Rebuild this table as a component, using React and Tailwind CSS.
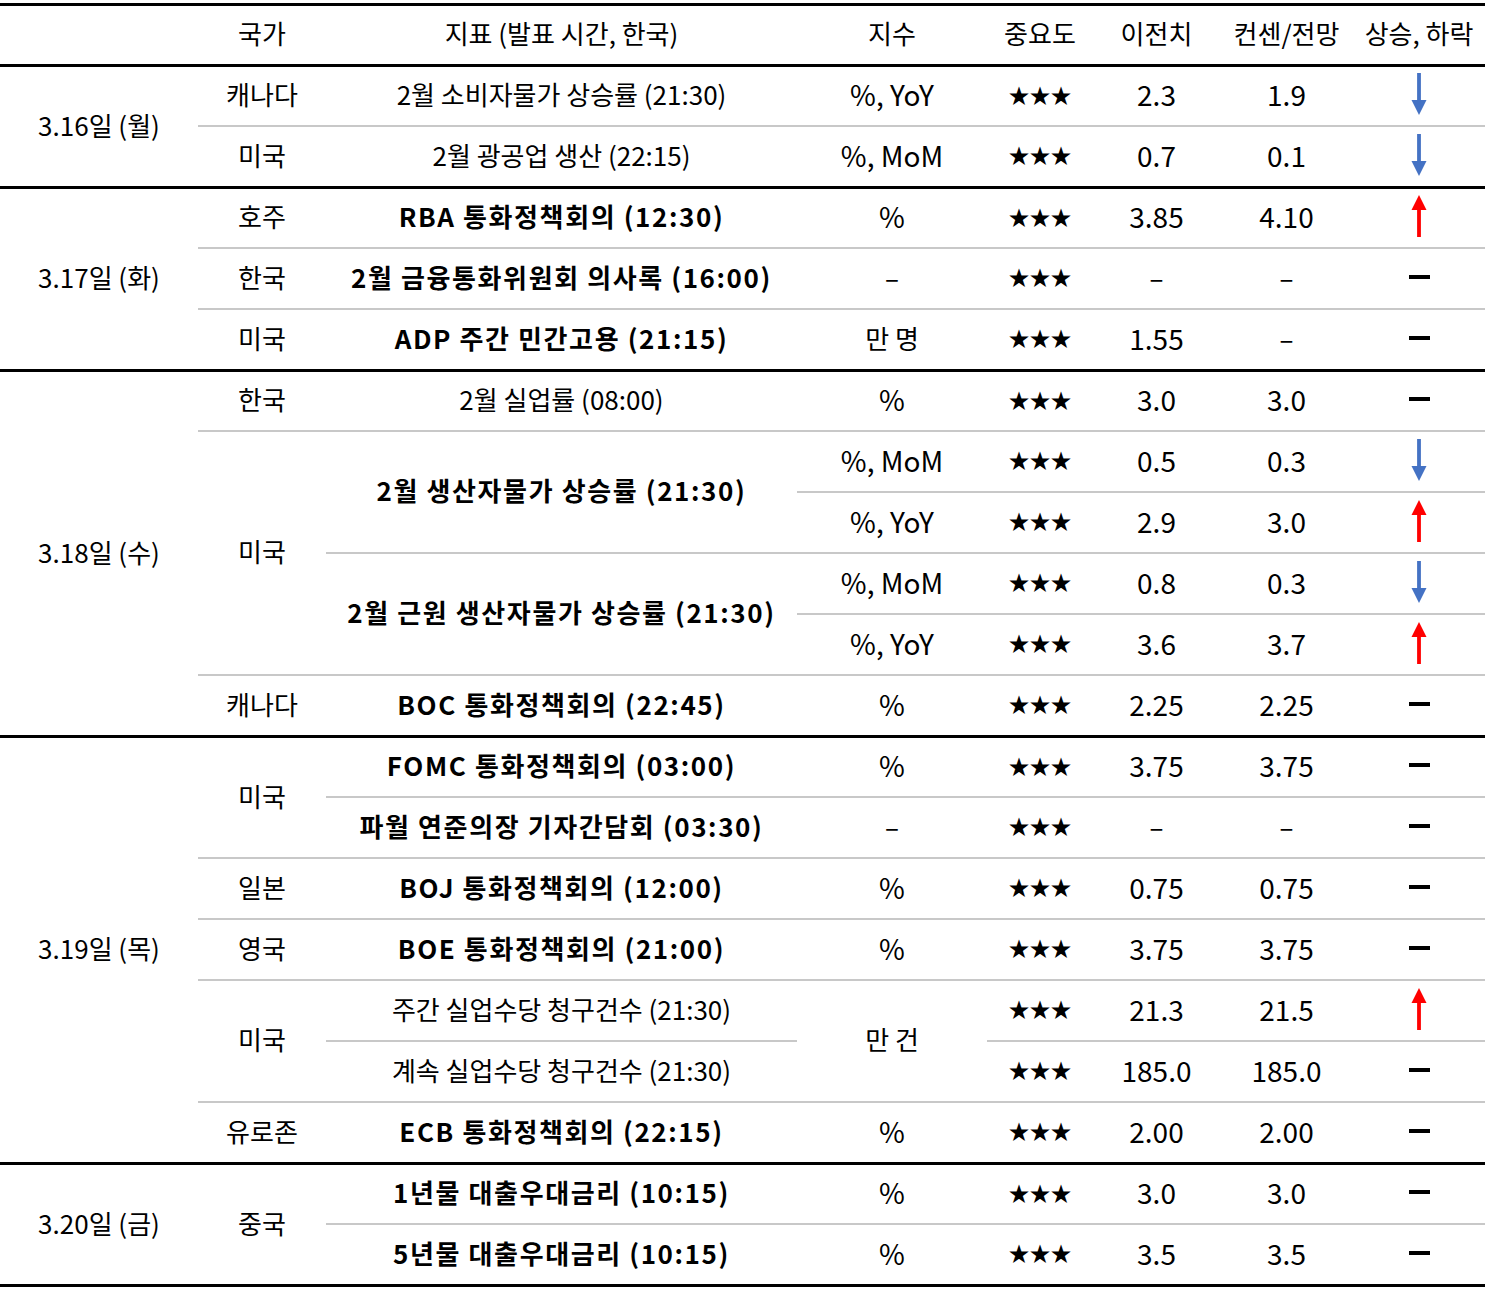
import React from 'react';

const c = (t, s = 1) => ({ t, s });
const B = (t, s = 1) => ({ t, s, b: true });
const star = { t: '★★★', star: true };
const up = { arrow: 'up' };
const down = { arrow: 'down' };
const flat = { arrow: 'flat' };

const groups = [
  {
    date: '3.16일 (월)',
    rows: [
      [c('캐나다'), c('2월 소비자물가 상승률 (21:30)'), c('%, YoY'), star, c('2.3'), c('1.9'), down],
      [c('미국'), c('2월 광공업 생산 (22:15)'), c('%, MoM'), star, c('0.7'), c('0.1'), down],
    ],
  },
  {
    date: '3.17일 (화)',
    rows: [
      [c('호주'), B('RBA 통화정책회의 (12:30)'), c('%'), star, c('3.85'), c('4.10'), up],
      [c('한국'), B('2월 금융통화위원회 의사록 (16:00)'), c('–'), star, c('–'), c('–'), flat],
      [c('미국'), B('ADP 주간 민간고용 (21:15)'), c('만 명'), star, c('1.55'), c('–'), flat],
    ],
  },
  {
    date: '3.18일 (수)',
    rows: [
      [c('한국'), c('2월 실업률 (08:00)'), c('%'), star, c('3.0'), c('3.0'), flat],
      [c('미국', 4), B('2월 생산자물가 상승률 (21:30)', 2), c('%, MoM'), star, c('0.5'), c('0.3'), down],
      [c('%, YoY'), star, c('2.9'), c('3.0'), up],
      [B('2월 근원 생산자물가 상승률 (21:30)', 2), c('%, MoM'), star, c('0.8'), c('0.3'), down],
      [c('%, YoY'), star, c('3.6'), c('3.7'), up],
      [c('캐나다'), B('BOC 통화정책회의 (22:45)'), c('%'), star, c('2.25'), c('2.25'), flat],
    ],
  },
  {
    date: '3.19일 (목)',
    rows: [
      [c('미국', 2), B('FOMC 통화정책회의 (03:00)'), c('%'), star, c('3.75'), c('3.75'), flat],
      [B('파월 연준의장 기자간담회 (03:30)'), c('–'), star, c('–'), c('–'), flat],
      [c('일본'), B('BOJ 통화정책회의 (12:00)'), c('%'), star, c('0.75'), c('0.75'), flat],
      [c('영국'), B('BOE 통화정책회의 (21:00)'), c('%'), star, c('3.75'), c('3.75'), flat],
      [c('미국', 2), c('주간 실업수당 청구건수 (21:30)'), c('만 건', 2), star, c('21.3'), c('21.5'), up],
      [c('계속 실업수당 청구건수 (21:30)'), star, c('185.0'), c('185.0'), flat],
      [c('유로존'), B('ECB 통화정책회의 (22:15)'), c('%'), star, c('2.00'), c('2.00'), flat],
    ],
  },
  {
    date: '3.20일 (금)',
    rows: [
      [c('중국', 2), B('1년물 대출우대금리 (10:15)'), c('%'), star, c('3.0'), c('3.0'), flat],
      [B('5년물 대출우대금리 (10:15)'), c('%'), star, c('3.5'), c('3.5'), flat],
    ],
  },
];

const spanCls = {
  1: '',
  2: 'row-span-2',
  3: 'row-span-3',
  4: 'row-span-4',
  6: 'row-span-6',
  7: 'row-span-7',
};

// latin-only cells (numbers, units) read a bit larger in the source
const isLatin = (t) => typeof t === 'string' && /[0-9%]/.test(t) && !/[가-힣]/.test(t);

const Arrow = ({ dir }) => {
  if (dir === 'flat') return <div className="w-[21px] h-[4px] bg-black" />;
  const color = dir === 'up' ? '#ff0000' : '#4472c4';
  return (
    <svg width="18" height="42" viewBox="0 0 18 42" className={dir === 'up' ? '' : 'rotate-180'}>
      <polygon points="9,0 16.5,15 1.5,15" fill={color} />
      <rect x="7.1" y="13" width="3.8" height="29" fill={color} />
    </svg>
  );
};

const Cell = ({ cell, line }) => {
  const border = line === 'k' ? 'border-t-[3px] border-black' : 'border-t-2 border-[#c8c8c8]';
  let content = cell.t;
  let text = isLatin(cell.t) ? 'text-[28px]' : 'text-[26px]';
  if (cell.arrow) content = <Arrow dir={cell.arrow} />;
  if (cell.star) text = 'text-[21px]';
  if (cell.b) text = 'text-[26px] font-bold tracking-[1.6px]';
  return (
    <div className={`${border} ${spanCls[cell.s || 1]} ${text} pb-1 flex items-center justify-center whitespace-nowrap`}>
      {content}
    </div>
  );
};

const headers = ['', '국가', '지표 (발표 시간, 한국)', '지수', '중요도', '이전치', '컨센/전망', '상승, 하락'];

const cols = 'grid grid-cols-[198px_128px_471px_190px_106px_127px_133px_132px]';

export default function App() {
  return (
    <div className="w-[1485px] min-h-[1289px] bg-white pt-[3px] font-['Noto_Sans_CJK_KR',sans-serif] text-black leading-none">
      <div className={`${cols} h-[61px] border-t-[3px] border-black`}>
        {headers.map((h, i) => (
          <div key={i} className="pb-1 flex items-center justify-center text-[26px] whitespace-nowrap">
            {h}
          </div>
        ))}
      </div>
      <div className={`${cols} auto-rows-[61px] border-b-[3px] border-black`}>
        {groups.map((g) =>
          g.rows.map((row, i) => (
            <React.Fragment key={g.date + i}>
              {i === 0 && <Cell cell={{ t: g.date, s: g.rows.length }} line="k" />}
              {row.map((cell, j) => (
                <Cell key={j} cell={cell} line={i === 0 ? 'k' : 'g'} />
              ))}
            </React.Fragment>
          ))
        )}
      </div>
    </div>
  );
}
